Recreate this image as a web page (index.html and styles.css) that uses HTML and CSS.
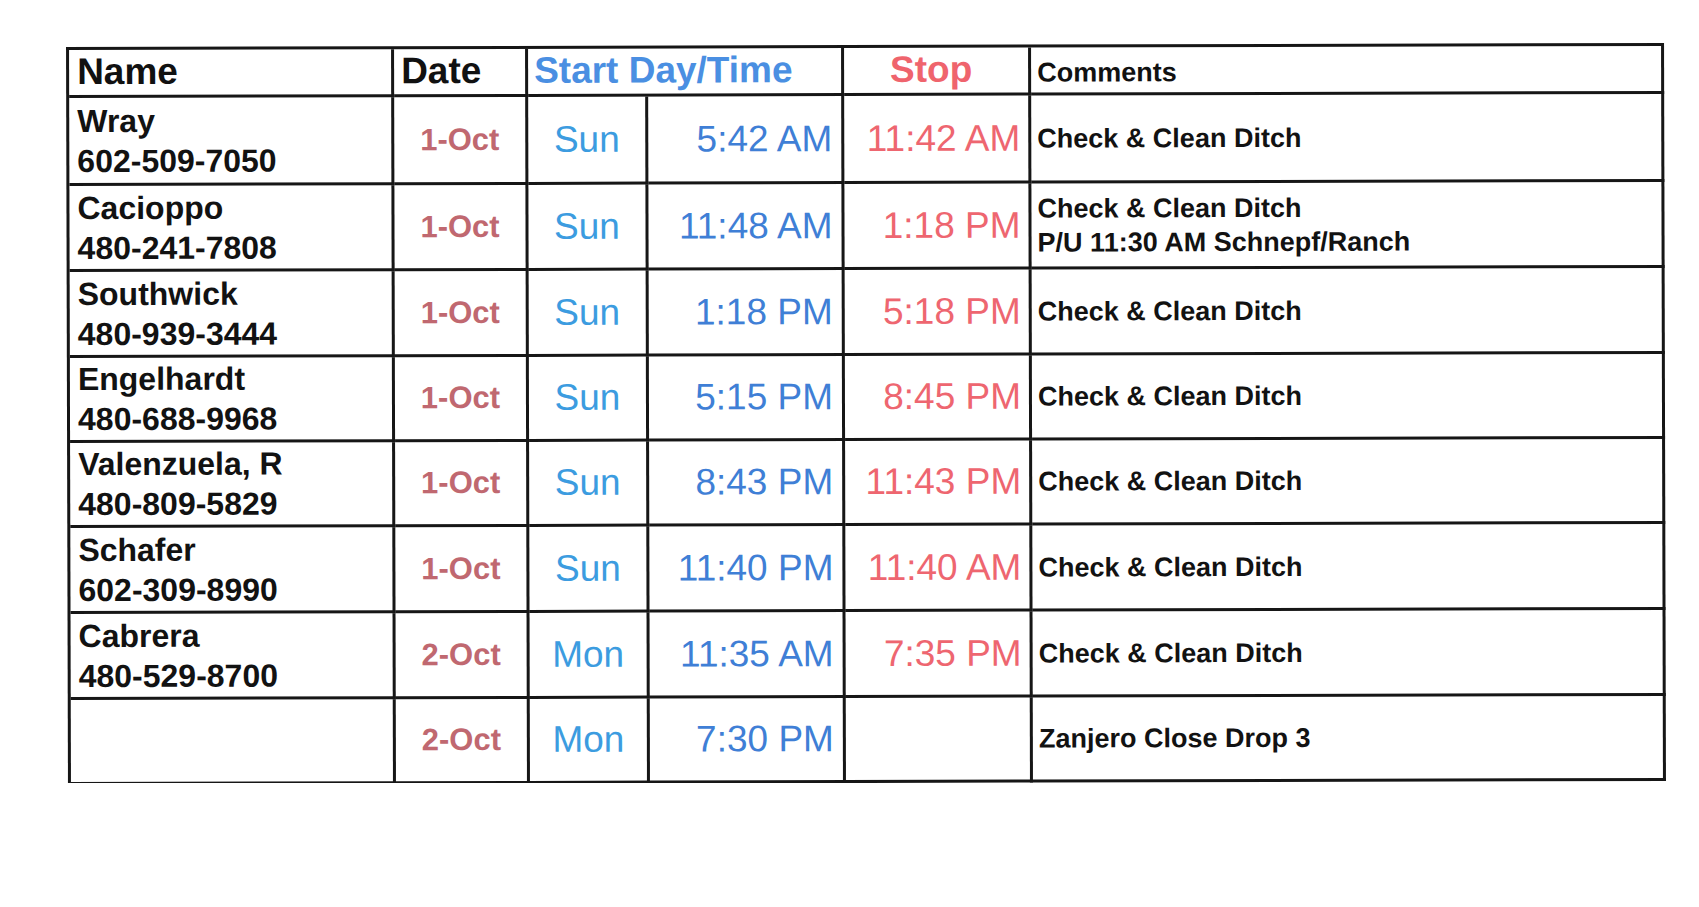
FILE: index.html
```html
<!DOCTYPE html>
<html lang="en">
<head>
<meta charset="utf-8">
<title>Ditch Schedule</title>
<link rel="stylesheet" href="styles.css">
</head>
<body>
<main class="sheet">
  <table class="log">
    <colgroup>
      <col class="c-name"><col class="c-date"><col class="c-day"><col class="c-time"><col class="c-stop"><col class="c-comm">
    </colgroup>
    <thead>
      <tr class="head">
        <th class="h-name">Name</th>
        <th class="h-date">Date</th>
        <th class="h-start" colspan="2">Start Day/Time</th>
        <th class="h-stop">Stop</th>
        <th class="h-comm">Comments</th>
      </tr>
    </thead>
    <tbody>
      <tr class="row r1">
        <td class="name">Wray<br>602-509-7050</td>
        <td class="date">1-Oct</td>
        <td class="day">Sun</td>
        <td class="time">5:42 AM</td>
        <td class="stop">11:42 AM</td>
        <td class="comm">Check &amp; Clean Ditch</td>
      </tr>
      <tr class="row r2">
        <td class="name">Cacioppo<br>480-241-7808</td>
        <td class="date">1-Oct</td>
        <td class="day">Sun</td>
        <td class="time">11:48 AM</td>
        <td class="stop">1:18 PM</td>
        <td class="comm">Check &amp; Clean Ditch<br>P/U 11:30 AM Schnepf/Ranch</td>
      </tr>
      <tr class="row r3">
        <td class="name">Southwick<br>480-939-3444</td>
        <td class="date">1-Oct</td>
        <td class="day">Sun</td>
        <td class="time">1:18 PM</td>
        <td class="stop">5:18 PM</td>
        <td class="comm">Check &amp; Clean Ditch</td>
      </tr>
      <tr class="row r4">
        <td class="name">Engelhardt<br>480-688-9968</td>
        <td class="date">1-Oct</td>
        <td class="day">Sun</td>
        <td class="time">5:15 PM</td>
        <td class="stop">8:45 PM</td>
        <td class="comm">Check &amp; Clean Ditch</td>
      </tr>
      <tr class="row r5">
        <td class="name">Valenzuela, R<br>480-809-5829</td>
        <td class="date">1-Oct</td>
        <td class="day">Sun</td>
        <td class="time">8:43 PM</td>
        <td class="stop">11:43 PM</td>
        <td class="comm">Check &amp; Clean Ditch</td>
      </tr>
      <tr class="row r6">
        <td class="name">Schafer<br>602-309-8990</td>
        <td class="date">1-Oct</td>
        <td class="day">Sun</td>
        <td class="time">11:40 PM</td>
        <td class="stop">11:40 AM</td>
        <td class="comm">Check &amp; Clean Ditch</td>
      </tr>
      <tr class="row r7">
        <td class="name">Cabrera<br>480-529-8700</td>
        <td class="date">2-Oct</td>
        <td class="day">Mon</td>
        <td class="time">11:35 AM</td>
        <td class="stop">7:35 PM</td>
        <td class="comm">Check &amp; Clean Ditch</td>
      </tr>
      <tr class="row r8">
        <td class="name"></td>
        <td class="date">2-Oct</td>
        <td class="day">Mon</td>
        <td class="time">7:30 PM</td>
        <td class="stop"></td>
        <td class="comm">Zanjero Close Drop 3</td>
      </tr>
    </tbody>
  </table>
</main>
</body>
</html>
```

FILE: styles.css
```css
html, body {
  margin: 0;
  padding: 0;
  background: #ffffff;
}

body {
  font-family: "Liberation Sans", Arial, Helvetica, sans-serif;
  color: #141414;
}

.sheet {
  padding: 45px 0 0 67px;
}

.log {
  border-collapse: separate;
  border-spacing: 0;
  table-layout: fixed;
  width: 1598px;
  border-top: 3px solid #161616;
  border-left: 3px solid #161616;
  transform: rotate(-0.15deg);
  transform-origin: 50% 50%;
}

.c-name { width: 325px; }
.c-date { width: 134px; }
.c-day  { width: 120px; }
.c-time { width: 196px; }
.c-stop { width: 187px; }
.c-comm { width: 633px; }

.log th,
.log td {
  border-right: 3px solid #161616;
  border-bottom: 3px solid #161616;
  padding: 0;
  box-sizing: border-box;
  white-space: nowrap;
  overflow: hidden;
}

/* header */
.log .head th {
  height: 45px;
  vertical-align: baseline;
  text-align: left;
  font-weight: 700;
  font-size: 37px;
  line-height: 40px;
  padding-top: 2px;
}

.log .head .h-name { padding-left: 8px; color: #111; }
.log .head .h-date { padding-left: 7px; color: #111; }
.log .head .h-start { padding-left: 6px; color: #4a8fe2; }
.log .head .h-stop { text-align: center; color: #ef646d; padding-right: 10px; }
.log .head .h-comm { font-size: 27px; padding-left: 6px; color: #111; }

/* body rows */
.log .row td { vertical-align: middle; }
.log .r1 td { height: 88px; }
.log .r2 td, .log .r3 td, .log .r6 td, .log .r7 td { height: 86px; }
.log .r4 td, .log .r5 td, .log .r8 td { height: 85px; }

.log .name {
  padding-left: 8px;
  font-weight: 700;
  font-size: 32px;
  line-height: 40px;
  color: #121212;
}

.log .date {
  text-align: center;
  font-weight: 700;
  font-size: 31px;
  color: #c06870;
}

.log .day {
  text-align: center;
  font-size: 37px;
  color: #3c9ce0;
}

.log .time {
  text-align: right;
  padding-right: 9px;
  font-size: 37px;
  color: #3f7fd6;
}

.log .stop {
  text-align: right;
  padding-right: 8px;
  font-size: 37px;
  color: #ee6670;
}

.log .comm {
  padding-left: 6px;
  font-weight: 700;
  font-size: 27px;
  line-height: 34px;
  color: #121212;
}
```
